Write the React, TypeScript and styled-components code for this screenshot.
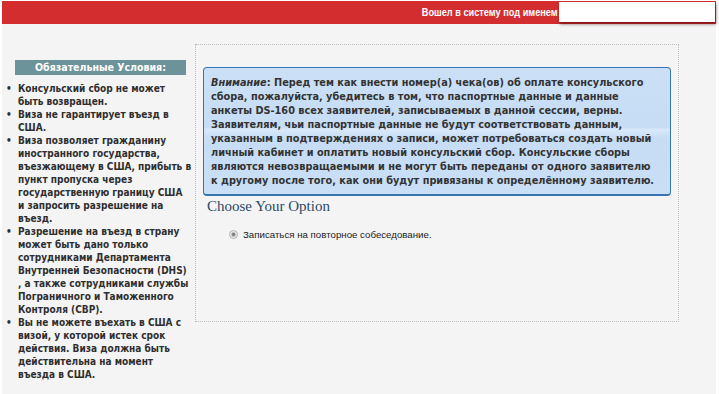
import { createGlobalStyle } from 'styled-components';
import styled from 'styled-components';

const GlobalStyle = createGlobalStyle`
  html, body {
    margin: 0;
    padding: 0;
    background: #ffffff;
  }
  body {
    font-family: "DejaVu Sans", Verdana, sans-serif;
  }
`;

// lines as they wrap in the original sidebar
const CONDITIONS = [
  ['Консульский сбор не может', 'быть возвращен.'],
  ['Виза не гарантирует въезд в', 'США.'],
  [
    'Виза позволяет гражданину',
    'иностранного государства,',
    'въезжающему в США, прибыть в',
    'пункт пропуска через',
    'государственную границу США',
    'и запросить разрешение на',
    'въезд.',
  ],
  [
    'Разрешение на въезд в страну',
    'может быть дано только',
    'сотрудниками Департамента',
    'Внутренней Безопасности (DHS)',
    ', а также сотрудниками службы',
    'Пограничного и Таможенного',
    'Контроля (CBP).',
  ],
  [
    'Вы не можете въехать в США с',
    'визой, у которой истек срок',
    'действия. Виза должна быть',
    'действительна на момент',
    'въезда в США.',
  ],
];

const NOTICE_LINES = [
  'сбора, пожалуйста, убедитесь в том, что паспортные данные и данные',
  'анкеты DS-160 всех заявителей, записываемых в данной сессии, верны.',
  'Заявителям, чьи паспортные данные не будут соответствовать данным,',
  'указанным в подтверждениях о записи, может потребоваться создать новый',
  'личный кабинет и оплатить новый консульский сбор. Консульские сборы',
  'являются невозвращаемыми и не могут быть переданы от одного заявителю',
  'к другому после того, как они будут привязаны к определённому заявителю.',
];

const App = () => {
  return (
    <>
      <GlobalStyle />
      <Page>
        <TopBar>
          <LoginLabel>Вошел в систему под именем</LoginLabel>
          <UserBox />
        </TopBar>
        <Body>
          <Sidebar>
            <SidebarTitle>Обязательные Условия:</SidebarTitle>
            <ConditionList>
              {CONDITIONS.map((lines) => (
                <li key={lines[0]}>
                  {lines.map((line, i) => (
                    <TextLine key={i}>{line}</TextLine>
                  ))}
                </li>
              ))}
            </ConditionList>
          </Sidebar>
          <Main>
            <Notice>
              <TextLine>
                <em>Внимание</em>: Перед тем как внести номер(а) чека(ов) об оплате консульского
              </TextLine>
              {NOTICE_LINES.map((line) => (
                <TextLine key={line}>{line}</TextLine>
              ))}
            </Notice>
            <OptionTitle>Choose Your Option</OptionTitle>
            <OptionRow>
              <Radio />
              <OptionLabel>Записаться на повторное собеседование.</OptionLabel>
            </OptionRow>
          </Main>
        </Body>
      </Page>
    </>
  );
};

const Page = styled.div`
  margin: 1px 3px 0 2px;
  min-height: 393px;
  background: #f4f4f4;
`;

const TopBar = styled.header`
  height: 23px;
  background: #d42d2f;
  display: flex;
  align-items: flex-start;
  justify-content: flex-end;
  padding-right: 1px;
`;

const LoginLabel = styled.span`
  margin-top: 6px;
  margin-right: 1px;
  font-family: "Liberation Sans", Arial, sans-serif;
  font-size: 10px;
  font-weight: bold;
  color: #ffffff;
  transform: scaleX(0.92);
  transform-origin: right center;
`;

const UserBox = styled.div`
  width: 156px;
  height: 20px;
  margin-top: 1px;
  background: #ffffff;
  box-shadow: 1px 2px 3px rgba(60, 0, 0, 0.6);
`;

const Body = styled.div`
  display: flex;
  align-items: flex-start;
`;

const Sidebar = styled.aside`
  width: 193px;
  flex-shrink: 0;
  padding-top: 36px;
`;

const SidebarTitle = styled.h3`
  margin: 0 0 0 13px;
  width: 171px;
  height: 15px;
  background: #6d939a;
  color: #ffffff;
  font-family: "DejaVu Sans Condensed", "DejaVu Sans", sans-serif;
  font-size: 10.5px;
  font-weight: bold;
  line-height: 15px;
  text-align: center;
`;

const ConditionList = styled.ul`
  margin: 7px 0 0;
  padding: 0 0 0 16px;
  list-style: none;
  color: #2f2f2f;
  font-family: "DejaVu Sans Condensed", "DejaVu Sans", sans-serif;
  font-size: 10px;
  font-weight: bold;
  line-height: 13px;

  li {
    position: relative;
  }

  li::before {
    content: '•';
    position: absolute;
    left: -12px;
    top: 0;
  }
`;

const TextLine = styled.span`
  display: block;
  white-space: nowrap;
`;

const Main = styled.main`
  width: 484px;
  height: 278px;
  margin-top: 20px;
  border: 1px dotted #bdbdbd;
  padding: 22px 7px 0 7px;
  box-sizing: border-box;
  display: flex;
  flex-direction: column;
`;

const Notice = styled.div`
  border: 1px solid #3a74ad;
  border-bottom-width: 2px;
  border-radius: 4px;
  background: linear-gradient(
    #cbe0f6 0%,
    #c6ddf5 47%,
    #d8e8f9 49%,
    #c6ddf5 56%,
    #c9dff6 100%
  );
  padding: 8px 4px 6px 7px;
  overflow: hidden;
  color: #333333;
  font-family: "DejaVu Sans", Verdana, sans-serif;
  font-size: 9.75px;
  font-weight: bold;
  line-height: 14px;

  em {
    font-style: italic;
  }
`;

const OptionTitle = styled.h2`
  margin: 2px 0 0 4px;
  font-family: "Liberation Serif", Georgia, serif;
  font-size: 15px;
  font-weight: normal;
  color: #2b4a68;
  line-height: 17px;
`;

const OptionRow = styled.div`
  display: flex;
  align-items: center;
  gap: 5px;
  margin: 14px 0 0 26px;
`;

const Radio = styled.span`
  width: 7px;
  height: 7px;
  border-radius: 50%;
  border: 1px solid #b4b4b4;
  background: radial-gradient(circle, #808080 0, #8a8a8a 1.5px, #e6e6e6 2.5px, #f2f2f2 100%);
`;

const OptionLabel = styled.span`
  font-family: "Liberation Sans", Arial, sans-serif;
  font-size: 9.7px;
  color: #222222;
`;

export default App;
